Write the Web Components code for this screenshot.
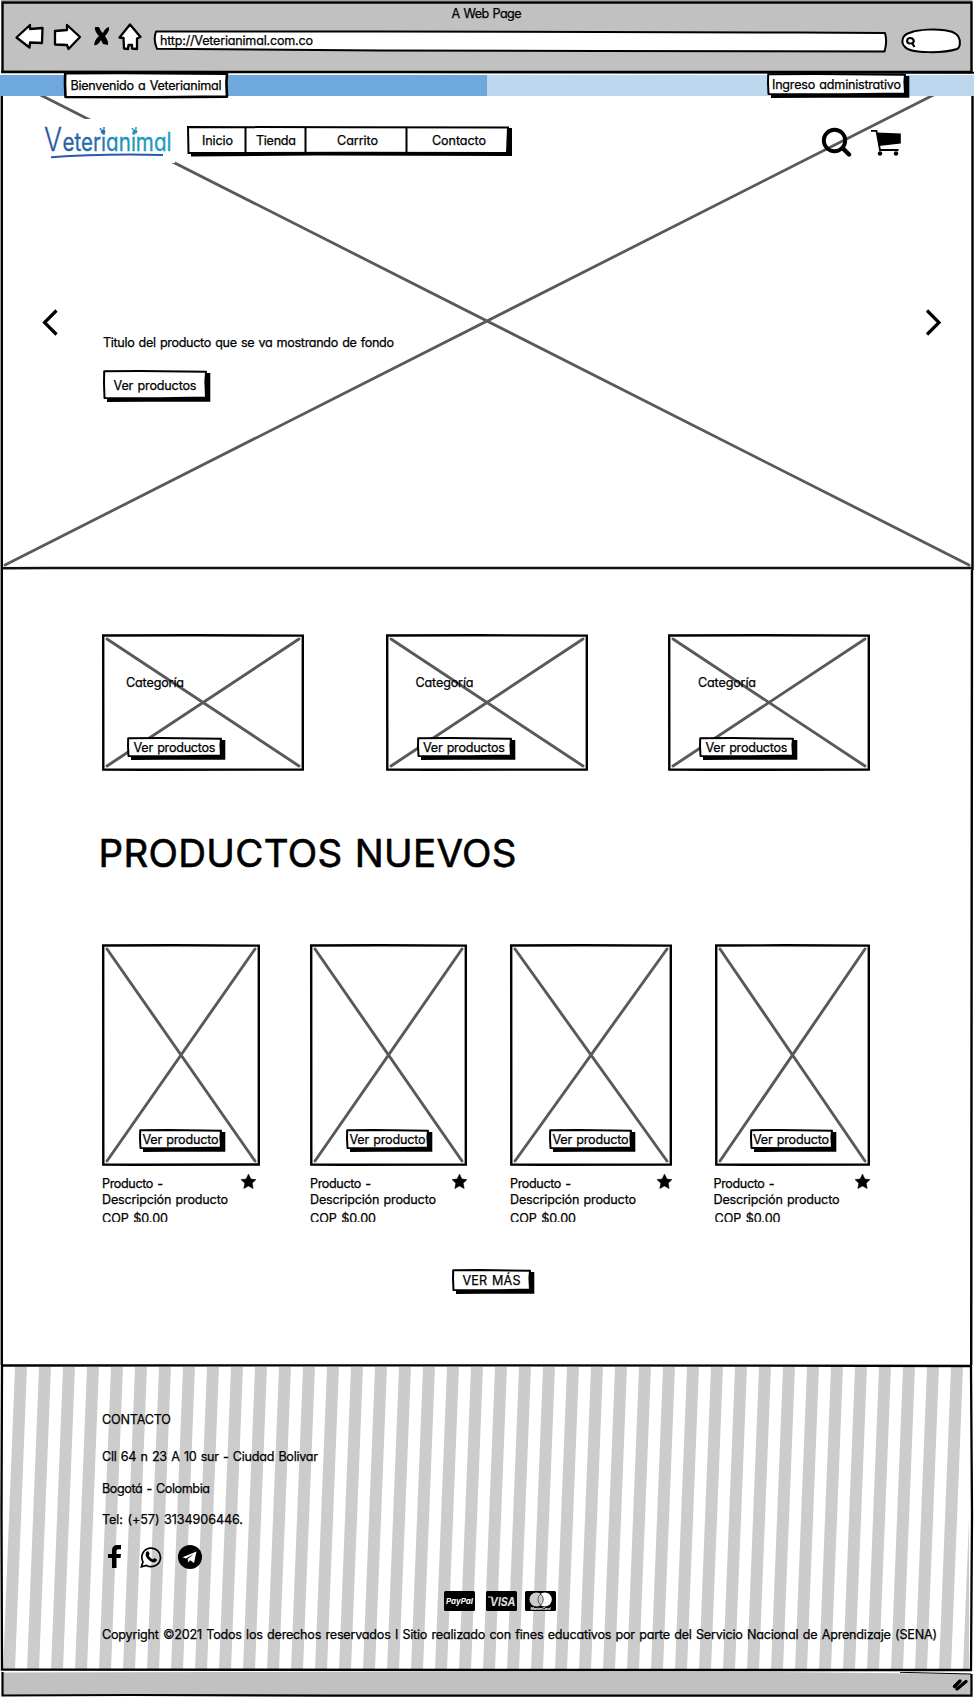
<!DOCTYPE html>
<html lang="es">
<head>
<meta charset="utf-8">
<title>Veterianimal</title>
<style>
body{margin:0;background:#fff;color:#000;font:400 12.600px/20px Inter,"Open Sans",sans-serif;font-feature-settings:"cv11" 1}
</style>
</head>
<body>
<veteri-page></veteri-page>
<script>
const define = (name, html, setup) => customElements.define(name, class extends HTMLElement {
  connectedCallback() {
    if (this.shadowRoot) return;
    const root = this.attachShadow({ mode: 'open' });
    root.innerHTML = typeof html === 'function' ? html(this) : html;
    if (setup) setup(this, root);
  }
});

/* A line of lettering, tracked to an exact width */
define('sk-text', '<style>:host{display:block;white-space:nowrap;flex:none;height:20px;word-spacing:1px;-webkit-text-stroke:.25px #000}span{display:inline-block;transform:translateY(1px)}</style><span><slot></slot></span>', (el, root) => {
  const w = +el.getAttribute('w'), s = root.querySelector('span');
  el.style.width = w + 'px';
  s.style.letterSpacing = ((w - s.getBoundingClientRect().width) / (el.textContent.length - 1)) + 'px';
});

/* Hand-inked button; the drop shadow lies outside its box */
define('sk-button', el => {
  const w = +el.getAttribute('w'), h = +el.getAttribute('h'), flat = el.hasAttribute('flat');
  return `<style>:host{display:flex;position:relative;align-items:center;justify-content:center;flex:none;width:${w}px;height:${h}px}
  svg{position:absolute;left:0;top:0;overflow:visible}sk-text{position:relative}</style>
  <svg width="${w}" height="${h}">
  ${flat ? '' : `<path d="M4 ${h-2}V${h+3}L${w*.4} ${h+2.8}L${w+3.3} ${h+2.8}V3H${w-2}V${h-2}Z"/>`}
  <path d="M1.2 1.2L${w*.35} 1L${w-1} 1.8L${w-1.6} ${h*.4}L${w-1} ${h-1.4}L${w*.55} ${h-.8}L1.5 ${h-1}L1 ${h*.45}Z" fill="#fff" stroke="#000" stroke-width="${flat ? 2.6 : 2}" stroke-linejoin="round"/></svg>
  <sk-text w="${el.getAttribute('tw')}">${el.textContent}</sk-text>`;
});

/* Crossed picture placeholder */
define('sk-picture', el => {
  const w = +el.getAttribute('w'), h = +el.getAttribute('h');
  return `<style>:host{display:block;position:relative;flex:none;width:${w}px;height:${h}px;box-sizing:border-box}svg{position:absolute;left:0;top:0}div{position:relative}</style>
  <svg width="${w}" height="${h}"><path d="M1.2 1.5L${w*.45} 1.3L${w-1.2} 1.6V${h-1.5}L${w*.2} ${h-1.2}L1.3 ${h-1.4}Z" fill="#fff" stroke="#000" stroke-width="2.4"/>
  <path d="M5 5L${w-5} ${h-5}M${w-5} 5L5 ${h-5}" stroke="#595959" stroke-width="2.9" stroke-linecap="round"/></svg><div><slot></slot></div>`;
});

define('sk-category', el => `<style>:host{display:block}sk-text{margin:0 0 0 ${el.getAttribute('tx') - 1}px;padding-top:38px}sk-button{margin:45px 0 0 ${el.getAttribute('tx')}px}</style>
<sk-picture w="202" h="137"><sk-text w="58">Categoría</sk-text><sk-button w="95" h="20" tw="82">Ver productos</sk-button></sk-picture>`);

define('sk-product', el => {
  const g = n => +(el.getAttribute(n) || 0);
  return `<style>:host{display:block;width:${g('w')}px}sk-button{margin-left:${g('bx')}px}.place{height:184.500px}
  .info{display:flex;justify-content:space-between;padding-top:7px;height:33px;box-sizing:content-box;margin-left:${g('dx')}px;margin-right:${g('sr')}px}
  .info svg{margin-top:1px;flex:none}.lines{width:0;margin-right:14px}.lines sk-text{height:16px}.price{height:16px;overflow:hidden}.price sk-text{margin-top:2px}
  </style><sk-picture w="${g('w')}" h="222"><div class="place"></div><sk-button w="83" h="20" tw="76">Ver producto</sk-button></sk-picture>
  <div class="info"><div class="lines"><sk-text w="61">Producto -</sk-text><sk-text w="126">Descripción producto</sk-text></div>
  <svg width="15" height="15" viewBox="0 0 15 15"><path d="M7.500 0L9.900 5L15 5.600L11.200 9.200L12.200 14.600L7.500 12L2.800 14.600L3.800 9.200L0 5.600L5.100 5Z" stroke="#000" stroke-width=".5"/></svg></div>
  <div class="price"><sk-text w="66">COP $0.00</sk-text></div>`;
});

define('sk-chrome', `<style>:host{display:flex;position:relative;flex-direction:column;align-items:center;height:75px;box-sizing:border-box;padding-top:3px}
.art{position:absolute;left:0;top:0}sk-text{position:relative}.url{align-self:flex-start;margin:7px 0 0 160px}.t{margin-right:1px}</style>
<svg class="art" width="974" height="75"><path d="M2.500 2.500H971.500V72H2.500Z" fill="#c1c1c1" stroke="#000" stroke-width="2.400"/><path d="M1 71.700L400 72L974 72.800" stroke="#000" stroke-width="2"/><path d="M1 1H972" stroke="#444"/>
<g fill="#fff" stroke="#000" stroke-width="2.300" stroke-linejoin="round" stroke-linecap="round"><path d="M30 25L16.500 37.500L29.500 47.500L30 42.500L42 43L42.500 28L30 29Z"/><path d="M55 31L67 30L67 25L80 37L68.500 49L67 45L55 44.500Z"/><path d="M130 24.500L119.500 37.500L123.500 38L124 48.500L128 49L128.500 45L132 45L132 48.500L137 49L137 38.500L140.500 37Z"/>
<path d="M156 31.500L380 31.500L600 32L800 32.500L885 33Q887.500 42 884.500 51.500L600 51L380 50.500L157 48.800Q153 40 156 31.500Z" stroke-width="2"/>
<path d="M903 38C906 28 948 27 956 34C961 38 961 47 957 49C945 53 911 54 905 47C902 44 902 42 903 38Z" stroke-width="2"/></g>
<path d="M95 27L99 27Q101 32 103 33Q105 28 109 27Q110 31 105 36Q109 42 108 45L103 44L101 40Q98 46 94 45Q95 39 99 36Q94 31 95 27Z"/>
<path d="M909 43.500C906 42 907 38 910 38C914 38 915.500 43 911 43.500L909 43.500M912 43L914.500 47" fill="none" stroke="#000" stroke-width="2.200"/></svg>
<sk-text class="t" w="70">A Web Page</sk-text><sk-text class="url" w="153">http://Veterianimal.com.co</sk-text>`);

define('sk-welcome', `<style>:host{display:flex;position:relative;height:21px;justify-content:space-between;align-items:flex-start;background:linear-gradient(90deg,#6fa8dc 487px,#bdd7ee 487px);padding:0 68px 0 64px}
.a{margin-top:-3px}.b{margin-top:-2px}</style><sk-button class="a" flat w="164" h="26" tw="151">Bienvenido a Veterianimal</sk-button><sk-button class="b" w="139" h="22" tw="129">Ingreso administrativo</sk-button>`);

define('sk-logo', `<style>:host{display:block;flex:none;width:139px;height:44px;background:#fff}</style>
<svg width="139" height="44" viewBox="0 0 139 44" style="overflow:visible"><defs><linearGradient id="g" gradientUnits="userSpaceOnUse" x1="10" x2="135" y1="0" y2="0"><stop stop-color="#2358a4"/><stop offset=".4" stop-color="#256eae"/><stop offset=".6" stop-color="#1c93b9"/><stop offset="1" stop-color="#209ac5"/></linearGradient></defs>
<g fill="url(#g)" stroke="url(#g)" stroke-width=".3"><text x="8" y="32" font-size="32" textLength="18" lengthAdjust="spacingAndGlyphs" font-weight="300">V</text><text x="26.500" y="32" font-size="25" textLength="109" lengthAdjust="spacingAndGlyphs">eterianimal</text></g>
<g fill="#2370ae"><circle cx="67" cy="12.500" r="2.300"/><circle cx="64.500" cy="10" r="1"/><circle cx="68" cy="9" r="1"/></g><g fill="#1c93b9"><circle cx="99" cy="12.500" r="2.300"/><circle cx="96.500" cy="10" r="1"/><circle cx="100" cy="9" r="1"/></g>
<path d="M15 38.300Q65 34.500 127 36" fill="none" stroke="#275ba9" stroke-width="2"/></svg>`);

define('sk-nav', `<style>:host{display:flex;position:relative;width:322px;height:28px;flex:none;align-items:center}svg{position:absolute;left:0;top:0;overflow:visible}sk-text{position:relative}
.i{margin-left:15px}.t{margin-left:23px}.c{margin-left:41px}.o{margin-left:54px}</style>
<svg width="322" height="28"><path d="M4 26L4 30.500L130 29.500L325 30V2H319V26Z"/><path d="M1 1L160 1.300L321 1.500L320 27L160 26.800L1.500 27Z" fill="#fff" stroke="#000" stroke-width="2"/><path d="M58.500 1V27M118.500 1V27M219.500 1V27" stroke="#000" stroke-width="2"/></svg>
<sk-text class="i" w="31">Inicio</sk-text><sk-text class="t" w="40">Tienda</sk-text><sk-text class="c" w="41">Carrito</sk-text><sk-text class="o" w="54">Contacto</sk-text>`);

define('sk-hero', `<style>:host{display:block;position:relative;height:474px}.x{position:absolute;left:0;top:0}
.top{display:flex;position:relative;align-items:flex-start;padding:23px 73px 0 36px;height:44px}sk-nav{margin:7px 0 0 12px}.icons{margin:8px 0 0 auto;display:flex;gap:19px}
.mid{position:relative;display:flex;align-items:flex-start;margin-top:145px;padding:0 32px 0 41px}.mid>svg{flex:none}.copy{flex:1;padding:24px 0 0 44px}.copy sk-button{margin-top:18px}</style>
<svg class="x" width="974" height="474"><path d="M5 -19L969 469M969 -19L5 469" stroke="#595959" stroke-width="2.800" stroke-linecap="round"/><path d="M2 472.300L50 472L973 472" stroke="#111" stroke-width="2.600"/></svg>
<div class="top"><sk-logo></sk-logo><sk-nav></sk-nav><div class="icons"><svg width="31" height="30"><circle cx="13.500" cy="13.500" r="10.700" fill="none" stroke="#000" stroke-width="3.900"/><path d="M21.500 21L28 27.500" stroke="#000" stroke-width="4.400" stroke-linecap="round"/></svg>
<svg width="30" height="30" viewBox="0 0 30 30"><path d="M0 3.800H5.500L9 23H27.500" fill="none" stroke="#000" stroke-width="1.800"/><path d="M5.500 5.500L29.800 6.500V16.500L8 19Z"/><circle cx="9" cy="26.500" r="2.200"/><circle cx="25" cy="26.500" r="2.200"/></svg></div></div>
<div class="mid"><svg width="18" height="28"><path d="M15.500 2.500L3.500 14.500L15.500 26.500" fill="none" stroke="#000" stroke-width="3.200"/></svg>
<div class="copy"><sk-text w="291">Titulo del producto que se va mostrando de fondo</sk-text><sk-button w="104" h="29" tw="83">Ver productos</sk-button></div>
<svg width="18" height="28"><path d="M3 2.500L15 14.500L3 26.500" fill="none" stroke="#000" stroke-width="3.200"/></svg></div>`);

define('sk-catalog', `<style>:host{display:block;position:relative;height:794px;box-sizing:border-box;padding:64px 104px 0 102px}
.cats{display:grid;grid-template-columns:284px 282px 202px}h2{margin:56px 0 0 -3.500px;height:51px;font-size:38.500px;line-height:50px;font-weight:400}h2 sk-text{height:50px;-webkit-text-stroke:.6px #000}
.prods{display:grid;grid-template-columns:208px 200px 204.500px 155px;margin-top:66px}.more{margin:47px 0 0 350px}</style>
<div class="cats"><sk-category tx="25"></sk-category><sk-category tx="30.500"></sk-category><sk-category tx="31"></sk-category></div>
<h2><sk-text w="418">PRODUCTOS NUEVOS</sk-text></h2>
<div class="prods"><sk-product w="158" bx="37" sr="4"></sk-product><sk-product w="157" bx="36"></sk-product><sk-product w="162" bx="39"></sk-product><sk-product w="155" bx="35" dx="-1"></sk-product></div>
<sk-button class="more" w="79" h="22" tw="58">VER MÁS</sk-button>`);

define('sk-social', `<style>:host{display:flex;align-items:flex-start}svg{flex:none}</style>
<svg width="14" height="24"><path d="M13 0V4.300H10.500Q8.500 4.300 8.500 6V9H13L12.500 13H8.500V23H4V13H0V9H4V5.500Q4 0 9.500 0Z"/></svg>
<svg width="22" height="24" viewBox="0 0 22 24" style="margin-left:18px"><path d="M1.400 21.800L3 16.800A9.300 9.300 0 1 1 6.500 20.400Z" fill="none" stroke="#000" stroke-width="1.700"/><path d="M7.500 6.300Q9 6 9.500 8.500Q9.800 9.500 8.700 10.500Q10.200 13.500 13 14.500L14.300 13Q17 14 17 15Q16.300 17.400 13.500 17.400Q10 17 7.300 13.500Q5 10.500 5.700 8Q6.400 6.500 7.500 6.300Z"/></svg>
<svg width="24" height="24" style="margin-left:16px"><circle cx="12" cy="12" r="12"/><path d="M4.500 12.200L18.500 6.500L16 18L12.200 15.200L10.200 17.500L9.700 14L15.500 9L8 13.400Z" fill="#fff"/></svg>`);

define('sk-payments', `<style>:host{display:flex;gap:8px}svg{flex:none}text{font-weight:700;font-style:italic}</style>
<svg width="31" height="20"><rect width="31" height="20" rx="1.500"/><text x="2" y="12.500" font-size="8" fill="#fff" textLength="27" lengthAdjust="spacingAndGlyphs">PayPal</text></svg>
<svg width="31" height="20" style="margin-left:3px"><rect width="31" height="20" rx="1.500"/><text x="4" y="14.500" font-size="12" fill="#ddd" textLength="25.500" lengthAdjust="spacingAndGlyphs">VISA</text><path d="M2 6H6" stroke="#ddd"/></svg>
<svg width="31" height="20"><rect width="31" height="20" rx="1.500"/><circle cx="11.500" cy="8.500" r="7" fill="#ccc"/><circle cx="19.800" cy="8.500" r="7" fill="#fff"/><path d="M15.600 3A7 7 0 0 1 15.600 14A7 7 0 0 1 15.600 3Z" fill="#ccc" stroke="#333" stroke-width=".8"/><text x="5.500" y="18.700" font-size="3.500" fill="#fff" textLength="20">MasterCard</text></svg>`);

define('sk-footer', () => {
  let d = '';
  for (let x = 15; x < 1000; x += 24) d += `M${x} 0H${x + 12}L${x} 303H${x - 12}Z`;
  return `<style>:host{display:block;position:relative;height:308px;box-sizing:border-box;padding:45px 0 0 102px}.art{position:absolute;left:0;top:0}sk-text{position:relative}
  .b{margin-top:17px}.c{margin-top:12px}.d{margin-top:11px}sk-social{position:relative;margin:16px 0 0 6px}sk-payments{position:relative;margin:22px 0 0 342px}.e{margin-top:12.500px}</style>
  <svg class="art" width="974" height="308"><svg x="3" y="3" width="966" height="302" viewBox="3 0 966 302"><path d="${d}" fill="#ccc"/></svg>
  <path d="M2 1.500L500 1.300L971 2L972 150L971 306L500 306L2 305.500L1.500 150Z" fill="none" stroke="#000" stroke-width="2.300"/></svg>
  <sk-text w="69">CONTACTO</sk-text><sk-text class="b" w="216">Cll 64 n 23 A 10 sur - Ciudad Bolivar</sk-text><sk-text class="c" w="108">Bogotá - Colombia</sk-text><sk-text class="d" w="141">Tel: (+57) 3134906446.</sk-text>
  <sk-social></sk-social><sk-payments></sk-payments><sk-text class="e" w="835">Copyright ©2021 Todos los derechos reservados I Sitio realizado con fines educativos por parte del Servicio Nacional de Aprendizaje (SENA)</sk-text>`;
});

define('sk-status', `<style>:host{display:block;height:27px}svg{display:block}</style><svg width="974" height="27"><path d="M3 .5L230 0H780L971 2V23.500L500 24L3 24Z" fill="#c1c1c1"/><path d="M2.500 0V23.500L130 23L330 23.700H971.500V2" fill="none" stroke="#000" stroke-width="2.200"/><path d="M900 .3L971 2" stroke="#000" stroke-width="1"/><g stroke="#000" stroke-width="3.400" stroke-linecap="round"><path d="M954.500 14.500L960 9M957 17L966 9.500"/></g></svg>`);

define('veteri-page', `<style>:host{display:block;position:relative;width:974px;height:1698px;overflow:hidden}.frame{position:absolute;left:0;top:0}</style>
<svg class="frame" width="974" height="1698"><path d="M1.800 75V570M972.500 75V570" stroke="#000" stroke-width="2.400"/><path d="M1.800 570V1365M972 570L971.200 1365" stroke="#000" stroke-width="2.400"/></svg>
<sk-chrome></sk-chrome><sk-welcome></sk-welcome><sk-hero></sk-hero><sk-catalog></sk-catalog><sk-footer></sk-footer><sk-status></sk-status>`);
</script>
</body>
</html>
